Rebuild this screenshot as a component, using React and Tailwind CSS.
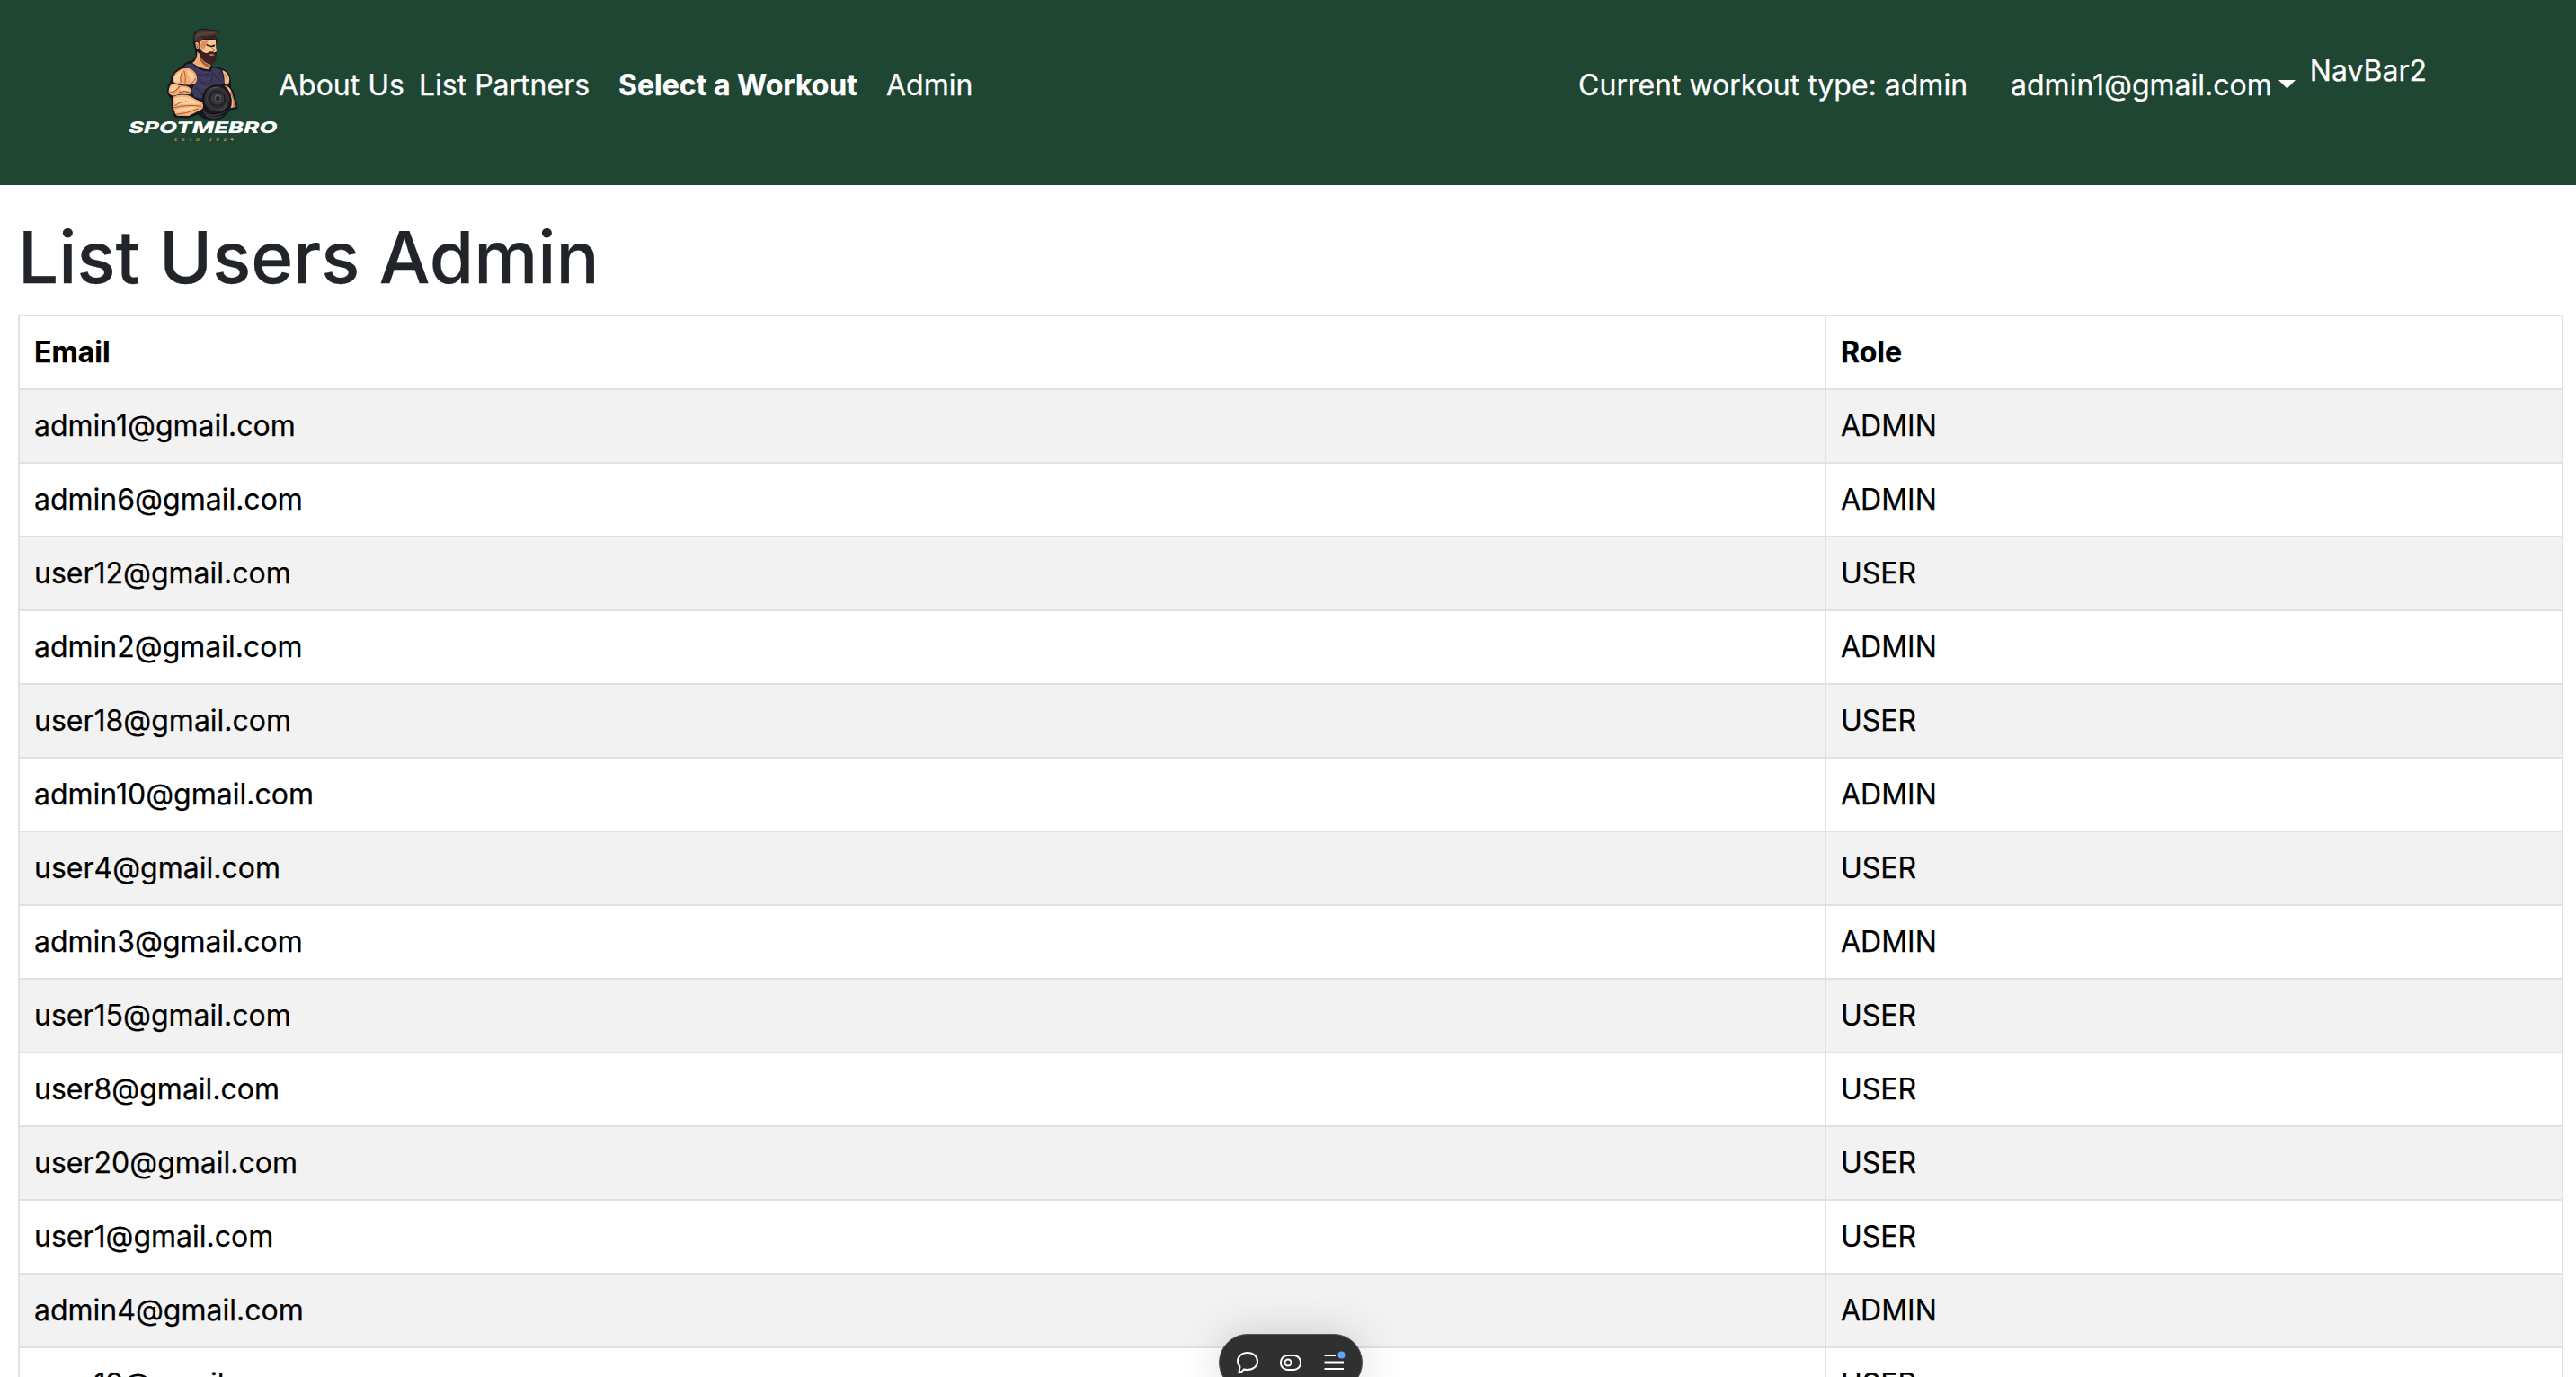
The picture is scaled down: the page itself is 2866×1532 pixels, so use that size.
import React from "react";

const users = [
  ["admin1@gmail.com", "ADMIN"],
  ["admin6@gmail.com", "ADMIN"],
  ["user12@gmail.com", "USER"],
  ["admin2@gmail.com", "ADMIN"],
  ["user18@gmail.com", "USER"],
  ["admin10@gmail.com", "ADMIN"],
  ["user4@gmail.com", "USER"],
  ["admin3@gmail.com", "ADMIN"],
  ["user15@gmail.com", "USER"],
  ["user8@gmail.com", "USER"],
  ["user20@gmail.com", "USER"],
  ["user1@gmail.com", "USER"],
  ["admin4@gmail.com", "ADMIN"],
  ["user19@gmail.com", "USER"],
];

function Logo() {
  return (
    <svg className="mt-2.5 h-[170px] w-[170px] shrink-0" viewBox="60 0 510 510" aria-label="SpotMeBro">
      {/* silhouette */}
      <path
        d="M286 96 Q286 70 318 66 L352 71 L372 72 L364 98 L361 145 Q362 178 343 186 L350 192 L378 198 Q400 204 408 228 L410 262 Q424 282 433 332 L405 338 Q396 362 362 370 L322 366 L300 352 L270 363 L226 362 Q212 352 213 300 Q196 288 199 270 Q200 256 208 246 Q212 208 246 194 Q258 176 280 174 L294 160 L292 135 Q286 126 286 96Z"
        fill="#17151f" stroke="#17151f" strokeWidth="2"
      />
      {/* neck */}
      <path d="M298 142 L308 152 Q316 178 344 186 L338 202 Q312 202 282 180 Q300 168 298 142Z" fill="#f3ae77" />
      <path d="M310 158 Q318 180 342 188 L336 196 Q312 186 306 166Z" fill="#a85f3d" />
      {/* face */}
      <path d="M304 108 Q326 100 360 104 L361 128 L363 141 L352 148 L322 148 L310 140 L304 128Z" fill="#fcc592" />
      <path d="M314 108 L336 105 L326 124 L318 139 L308 124Z" fill="#dd9159" />
      <path d="M292 112 Q302 106 304 120 L302 135 Q293 134 292 112Z" fill="#f4ae76" />
      <path d="M296 116 L300 121 L298 130" fill="none" stroke="#75402c" strokeWidth="2.5" />
      <path d="M328 116 L344 122 L358 118 L356 125 L344 127 L330 122Z" fill="#2a1b1d" />
      <path d="M346 127 L356 138 L348 142" fill="none" stroke="#a75d36" strokeWidth="3" />
      {/* hair */}
      <path d="M288 108 Q284 72 318 68 Q340 72 370 73 Q370 90 360 101 Q336 96 314 101 L308 112 L306 128 L302 112 Q292 106 288 108Z" fill="#493230" />
      <path d="M300 82 Q326 74 362 78 Q345 88 310 87 Q298 91 291 99 Q292 87 300 82Z" fill="#5c413d" />
      <path d="M311 92 Q337 94 362 86 L357 99 Q336 94 314 98Z" fill="#2e2023" />
      {/* beard */}
      <path d="M304 124 L312 138 Q322 150 333 146 Q342 138 356 145 L361 151 Q363 177 346 185 Q322 180 308 158Z" fill="#3b2021" />
      <path d="M337 153 Q348 147 356 154 L345 157Z" fill="#c9784f" />
      <path d="M314 150 Q320 169 341 179 M326 151 Q329 166 347 175" fill="none" stroke="#4c2b29" strokeWidth="2" />
      {/* shirt */}
      <path d="M254 193 Q264 180 282 182 Q310 208 340 206 L350 195 L376 202 Q385 218 387 248 L366 258 Q330 260 314 300 L288 294 L278 272 Q301 236 286 210 Q272 196 254 193Z" fill="#3c3959" />
      <path d="M282 183 Q310 206 338 206 L346 200 L348 208 Q312 216 282 183Z" fill="#232139" />
      <path d="M302 218 Q322 226 337 216 M306 240 Q324 256 344 246 L350 210 M356 214 Q360 235 380 240 M292 264 Q308 272 312 285 M370 210 L378 228" fill="none" stroke="#302d49" strokeWidth="4" />
      <path d="M300 202 Q320 214 336 211 M312 229 Q330 240 343 230 M300 256 Q320 262 330 262 M361 208 L370 228" fill="none" stroke="#4c476c" strokeWidth="3" />
      {/* near shoulder */}
      <path d="M249 199 Q278 192 292 214 Q304 236 290 250 Q266 258 240 248 Q220 252 216 238 Q218 210 249 199Z" fill="#f4ae77" />
      <path d="M252 204 Q236 222 240 244 Q220 248 221 232 Q228 212 252 204Z" fill="#ffcf9f" />
      <path d="M262 203 Q280 204 291 224 L282 242 Q268 224 262 203Z" fill="#ffcd9b" />
      <path d="M254 206 Q262 224 258 248 M246 212 Q240 228 244 246 M276 250 Q286 244 294 232" fill="none" stroke="#a85f3b" strokeWidth="3" />
      {/* biceps */}
      <path d="M211 251 Q228 250 243 256 Q275 253 279 274 Q280 286 266 286 Q242 282 226 289 Q207 291 203 278 Q202 262 211 251Z" fill="#f2ab73" />
      <path d="M214 254 Q225 254 234 258 L222 276 L206 274Z M241 262 Q264 258 273 274 Q256 270 243 278Z" fill="#ffcd9d" />
      <path d="M207 279 Q222 281 240 258 M238 278 Q256 270 276 280" fill="none" stroke="#80452f" strokeWidth="3" />
      {/* forearm */}
      <path d="M217 294 Q240 282 274 290 L294 302 L318 312 L318 332 L292 346 L270 357 L230 356 Q216 344 217 294Z" fill="#f5b17a" />
      <path d="M222 298 Q256 286 290 306 L310 318 Q270 314 226 322Z M226 337 Q262 326 297 326 L272 340 L231 346Z" fill="#ffcfa0" />
      <path d="M218 330 Q265 318 313 325 M228 352 Q262 350 302 333 M222 323 Q240 310 262 309" fill="none" stroke="#a45c39" strokeWidth="3" />
      {/* far arm */}
      <path d="M381 204 Q401 210 405 230 Q408 246 397 255 L389 247 Q390 222 381 204Z" fill="#f7b981" />
      <path d="M389 216 Q400 226 397 246" fill="none" stroke="#a9603c" strokeWidth="3" />
      <path d="M389 256 Q407 257 413 276 L428 326 L410 331 Q420 300 400 268Z" fill="#f4b17b" />
      <path d="M410 276 L421 306 L420 327" fill="none" stroke="#a9603c" strokeWidth="3" />
      {/* dumbbell */}
      <ellipse cx="356" cy="338" rx="41" ry="31" fill="#1b1b20" />
      <path d="M319 343 Q346 368 390 343 M326 354 Q350 370 378 358" fill="none" stroke="#4b4a50" strokeWidth="3" />
      <ellipse cx="363" cy="302" rx="49" ry="49" fill="#17171b" />
      <ellipse cx="364" cy="301" rx="42" ry="42" fill="#303036" />
      <ellipse cx="365" cy="300" rx="34" ry="34" fill="#29292e" stroke="#414147" strokeWidth="3" />
      <ellipse cx="366" cy="299" rx="24" ry="24" fill="#393940" stroke="#1e1e23" strokeWidth="4" />
      <ellipse cx="367" cy="298" rx="14" ry="15" fill="#55555b" stroke="#202026" strokeWidth="3" />
      <ellipse cx="367" cy="299" rx="8" ry="8" fill="#29292f" />
      <path d="M330 277 Q345 260 369 262 M397 321 Q385 340 362 341" fill="none" stroke="#55555b" strokeWidth="3" />
      {/* wordmark */}
      <g transform="translate(65 413) skewX(-14)" fontFamily="Inter, sans-serif">
        <text x="0" y="0" fontSize="53" fontWeight="800" fill="#fff" textLength="497" lengthAdjust="spacingAndGlyphs">
          SPOTMEBRO
        </text>
      </g>
      <text x="223" y="442" fontFamily="Inter, sans-serif" fontStyle="italic" fontSize="15" fontWeight="800" fill="#c98b48" textLength="196" lengthAdjust="spacing">
        ESTD 2024
      </text>
    </svg>
  );
}

function Navbar() {
  return (
    <nav className="flex h-[206px] items-start bg-[#1e4633] pr-[166px] pl-[140px] text-[32px] leading-[48px] whitespace-nowrap text-white [-webkit-text-stroke:0.25px]">
      <Logo />
      <div className="mt-[71px] flex">
        <a>About Us</a>
        <a className="ml-4">List Partners</a>
        <a className="ml-8 font-bold">Select a Workout</a>
        <a className="ml-8">Admin</a>
      </div>
      <div className="mt-[71px] ml-auto flex">
        <span>Current workout type: admin</span>
        <a className="ml-12 flex">
          admin1@gmail.com
          <svg className="mt-[18px] ml-[7px] h-2.5 w-[19px]" viewBox="0 0 19 10">
            <path d="M0 0H19L9.5 9.6Z" fill="currentColor" />
          </svg>
        </a>
      </div>
      <a className="mt-[55px] ml-4">NavBar2</a>
    </nav>
  );
}

function UsersTable() {
  return (
    <table className="w-[2832px] table-fixed border-collapse text-left text-[32px] leading-[48px] text-black [-webkit-text-stroke:0.25px]">
      <colgroup>
        <col className="w-[2010px]" />
        <col />
      </colgroup>
      <thead>
        <tr>
          <th className="border-2 border-[#dee2e6] px-4 py-4 font-bold">Email</th>
          <th className="border-2 border-[#dee2e6] px-4 py-4 font-bold">Role</th>
        </tr>
      </thead>
      <tbody>
        {users.map(([email, role]) => (
          <tr key={email} className="odd:bg-[#f2f2f2]">
            <td className="border-2 border-[#dee2e6] px-4 py-4">{email}</td>
            <td className="border-2 border-[#dee2e6] px-4 py-4">{role}</td>
          </tr>
        ))}
      </tbody>
    </table>
  );
}

function Toolbar() {
  return (
    <div className="absolute top-[1484px] left-[1356px] flex h-16 w-40 rounded-full border border-[#555] bg-[#303030] shadow-[0_0_50px_rgba(0,0,0,0.16)]">
      <svg className="h-full w-full" viewBox="1 1 158 62" fill="none" stroke="#fff" strokeWidth="2">
        <path d="M22.5 43 L23.5 36.5 Q21 34 21 30.5 C21 25 25.5 21 32 21 S43 25 43 30.5 S38.500 40 32 40 Q29.500 40 28 39.500 Q26 42.500 22.500 43Z" />
        <rect x="69" y="24" width="22" height="16" rx="7.500" />
        <circle cx="77" cy="32" r="3.500" />
        <path d="M117.500 24H130 M117.500 31.500H139 M117.500 39H139" />
        <circle cx="136.500" cy="23.500" r="4" fill="#60a5fa" stroke="none" />
      </svg>
    </div>
  );
}

export default function App() {
  return (
    <div className="relative h-[1532px] w-[2866px] overflow-hidden bg-white font-['Inter',sans-serif]">
      <Navbar />
      <main className="pt-8 pl-5">
        <h1 className="mb-4 text-[80px] leading-[96px] font-medium text-[#212529] [-webkit-text-stroke:0.25px]">List Users Admin</h1>
        <UsersTable />
      </main>
      <Toolbar />
    </div>
  );
}
